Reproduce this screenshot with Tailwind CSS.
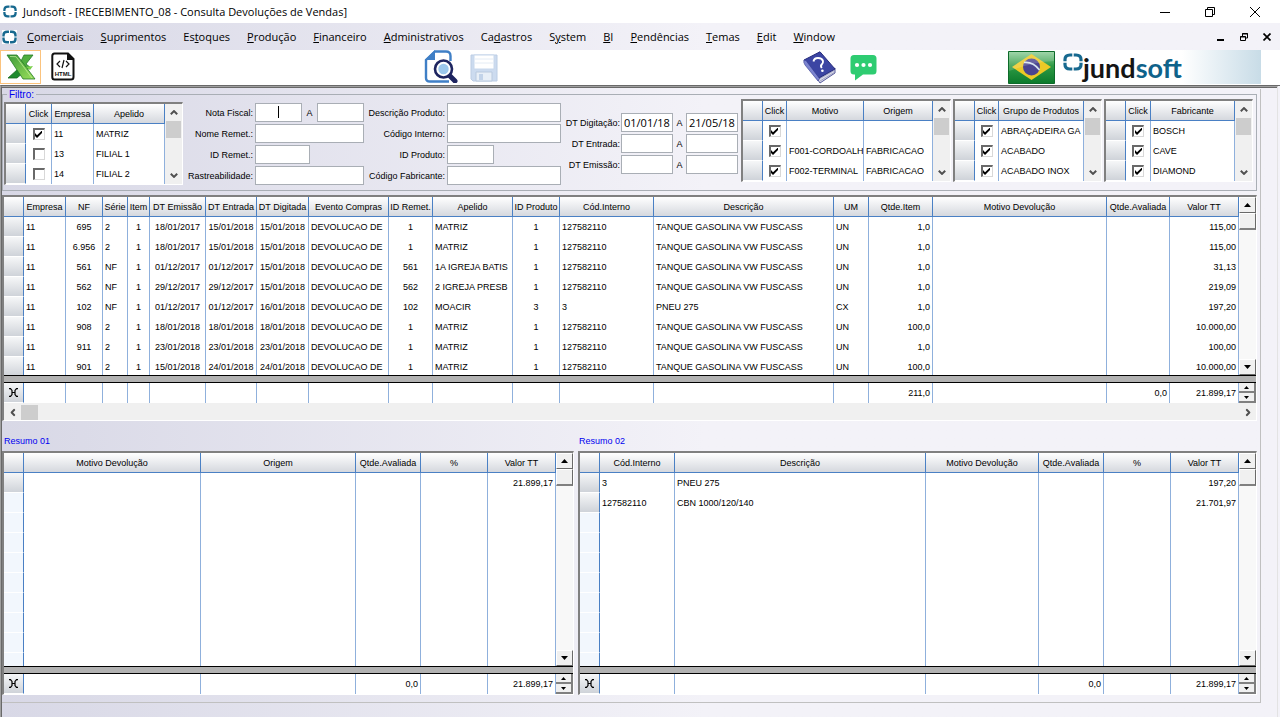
<!DOCTYPE html>
<html lang="pt-BR">
<head>
<meta charset="utf-8">
<meta name="viewport" content="width=device-width, initial-scale=1">
<title>Jundsoft - [RECEBIMENTO_08 - Consulta Devoluções de Vendas]</title>
<script src="https://cdn.jsdelivr.net/npm/@tailwindcss/browser@4"></script>
</head>
<body class="min-h-screen flex flex-col bg-white text-black text-[9px] leading-5 font-['Liberation_Sans',Arial,sans-serif]">

<svg class="hidden" aria-hidden="true">
  <symbol id="ring" viewBox="0 0 20 18">
    <path d="M9.300 2H7Q2 2 2 6.500V8.300M10.700 2H13q5 0 5 4.500v1.800M2 9.700v1.800Q2 16 7 16h2.300M10.700 16H13q5 0 5-4.500V9.700" fill="none" stroke="#17698f" stroke-width="3.200"/>
  </symbol>
  <symbol id="tick" viewBox="0 0 7 7"><path d="M0 2v3l2 2 5-5V-.5L2 4.200z" fill="#000"/></symbol>
  <symbol id="chev" viewBox="0 0 8 5"><path d="M.8 4.300 4 1.100l3.200 3.200" fill="none" stroke="#505050" stroke-width="2"/></symbol>
  <symbol id="tri" viewBox="0 0 7 4"><path d="M0 4 3.500 0 7 4z" fill="#000"/></symbol>
</svg>

<header class="h-[23px] bg-white flex items-center pl-[3px] font-['Open_Sans',sans-serif] text-[11px]">
  <svg class="w-[14px] h-[13px] mr-[6px]"><use href="#ring"/></svg>
  <h1 class="flex-1 whitespace-nowrap">Jundsoft - [RECEBIMENTO_08 - Consulta Devoluções de Vendas]</h1>
  <div class="flex items-center gap-[35px] pr-5">
    <button aria-label="Minimizar"><svg width="10" height="10" viewBox="0 0 10 10"><path d="M0 5.500h10" stroke="#000"/></svg></button>
    <button aria-label="Restaurar"><svg width="10" height="10" viewBox="0 0 10 10" fill="none" stroke="#000"><path d="M.5 2.500h7v7h-7zM2.500 2.500v-2h7v7h-2"/></svg></button>
    <button aria-label="Fechar"><svg width="10" height="10" viewBox="0 0 10 10"><path d="m0 0 10 10M10 0 0 10" stroke="#000"/></svg></button>
  </div>
</header>

<nav class="h-[27px] flex items-center pl-[2px] pr-[9px] bg-linear-to-r from-[#d8d8e6] to-[#f3f2f8] to-55% font-['Open_Sans',sans-serif] text-[11px]" aria-label="Menu principal">
  <svg class="w-[15px] h-[14px] mr-[10px] bg-white"><use href="#ring"/></svg>
  <div class="flex-1 flex gap-[17px] whitespace-nowrap">
    <button><u>C</u>omerciais</button><button><u>S</u>uprimentos</button><button>Es<u>t</u>oques</button><button><u>P</u>rodução</button><button><u>F</u>inanceiro</button><button><u>A</u>dministrativos</button><button>Ca<u>d</u>astros</button><button>S<u>y</u>stem</button><button><u>B</u>I</button><button><u>P</u>endências</button><button><u>T</u>emas</button><button><u>E</u>dit</button><button><u>W</u>indow</button>
  </div>
  <div class="flex items-center gap-[15px]">
    <button aria-label="Minimizar janela"><svg width="8" height="8" viewBox="0 0 8 8"><path d="M0 7h7" stroke="#000" stroke-width="2"/></svg></button>
    <button aria-label="Restaurar janela"><svg width="8" height="8" viewBox="0 0 8 8" fill="none" stroke="#000"><path d="M.5 3.500h5v4h-5zM0 4h6M2.500 3V.5h5v4.500H6M2 1h6"/></svg></button>
    <button aria-label="Fechar janela"><svg width="8" height="8" viewBox="0 0 8 8"><path d="m.5.5 7 7M7.500.5l-7 7" stroke="#000" stroke-width="1.700"/></svg></button>
  </div>
</nav>

<div class="h-[35px] bg-white flex items-start pr-[19px]" role="toolbar" aria-label="Ferramentas">
  <button class="w-[41px] h-[34px] border border-[#fbc37d] flex items-center justify-center" aria-label="Exportar para Excel">
    <svg width="30" height="27" viewBox="0 0 30 27">
      <defs><linearGradient id="xg" x1="0" y1="0" x2="1" y2="1"><stop offset="0" stop-color="#3c9a3a"/><stop offset="1" stop-color="#9be05a"/></linearGradient></defs>
      <path d="M18 1h9l-7 9 5 4-9 3-4-4z" fill="#4fae3f" stroke="#237a27" stroke-width=".8"/>
      <path d="M12 15 2 24h9l7-6z" fill="#1f8a2e" stroke="#17691f" stroke-width=".8"/>
      <path d="M1 1h10l18 24H17z" fill="url(#xg)" stroke="#237a27" stroke-width=".8"/>
      <path d="m4 2.500 6 .2L26 24" fill="none" stroke="#c8f0a0" stroke-opacity=".7"/>
      <path d="m20 13 7-1-3 4z" fill="#7bd14b"/>
    </svg>
  </button>
  <button class="ml-[10px] mt-[2px]" aria-label="Exportar para HTML">
    <svg width="24" height="29" viewBox="0 0 24 29">
      <path d="M3.500 1.500H17l5.500 5.500v18q0 2.500-2.500 2.500H3.500Q1.300 27.500 1.300 25V4q0-2.500 2.200-2.500z" fill="#fff" stroke="#111" stroke-width="2"/>
      <path d="M16 1v7h7z" fill="#111"/>
      <path d="m9 9-3 3 3 3M15 9l3 3-3 3M13 8l-2 8" fill="none" stroke="#111" stroke-width="1.200"/>
      <text x="12" y="24" text-anchor="middle" font-family="Liberation Sans" font-weight="bold" font-size="6" fill="#111">HTML</text>
    </svg>
  </button>
  <div class="flex-1 flex justify-end"><button class="mr-3" aria-label="Consultar">
    <svg width="34" height="33" viewBox="0 0 34 33">
      <path d="M26.500 11V6q0-4.500-4.500-4.500H11L2 10v18q0 3.500 4 3.500h19" fill="none" stroke="#3f7fc6" stroke-width="2.400"/>
      <path d="M11 0v10H1z" fill="#3f7fc6"/>
      <path d="m25 25 6 6" stroke="#1e2560" stroke-width="5" stroke-linecap="round"/>
      <circle cx="19.500" cy="19" r="8.500" fill="#fff" stroke="#1e2560" stroke-width="2.600"/>
      <circle cx="19.500" cy="19" r="5.200" fill="#9cc8ec"/>
    </svg>
  </button>
  <button class="mt-[2px]" aria-label="Salvar" disabled>
    <svg width="28" height="28" viewBox="0 0 28 28">
      <path d="M1 1h26v26H3l-2-2z" fill="#ccdbef" stroke="#bccde4"/>
      <path d="M4 1h20v14H4z" fill="#fff" stroke="#c8d8ec"/>
      <path d="M5 5h18M5 9h18" stroke="#e4ecf5"/>
      <path d="M6 18h16v9H6z" fill="#e8eff7" stroke="#b9c9de"/>
      <path d="M9 20h4v6H9z" fill="#c2d3e9"/>
    </svg>
  </button></div>
  <div class="w-[763px] flex items-start pl-[305px]">
  <button class="mt-px" aria-label="Ajuda">
    <svg width="34" height="33" viewBox="0 0 34 33">
      <path d="m1 9 14 20 2 3 15-10v-5L17 26z" fill="#d9dae8" stroke="#55599a"/>
      <path d="m16 28 16-9m-15 11 15-9" stroke="#8a8db5" stroke-width=".7"/>
      <path d="M1 9 17 .8 32 18l-16 9z" fill="#3c45a3" stroke="#262c7c"/>
      <path d="m1 9 2 .5 13.500 18L15 30 2 14Q0 11 1 9z" fill="#7c84cf" stroke="#333a90" stroke-width=".6"/>
      <path d="M10.500 10.500q.5-3.500 4.500-3.500t5 3q.3 2-1.300 3.500-1.500 1.500.1 3.500" fill="none" stroke="#fff" stroke-width="1.900"/>
      <circle cx="19.400" cy="19.800" r="1.300" fill="#fff"/>
    </svg>
  </button>
  <button class="ml-[13px] mt-[5px]" aria-label="Mensagens">
    <svg width="27" height="26" viewBox="0 0 27 26"><path d="M4 0h19q3.500 0 3.500 3.500V16q0 3.500-3.500 3.500H13L5 25.500v-6H4Q.5 19.500.5 16V3.500Q.5 0 4 0z" fill="#2ecc71"/><g fill="#fff"><circle cx="7" cy="10" r="2.100"/><circle cx="13.500" cy="10" r="2.100"/><circle cx="20" cy="10" r="2.100"/></g></svg>
  </button>
  <svg class="ml-auto" width="47" height="34" viewBox="0 0 47 34" role="img" aria-label="Brasil">
    <defs><linearGradient id="fg" x1="0" y1="0" x2="0" y2="1"><stop offset="0" stop-color="#8fcf9a"/><stop offset=".45" stop-color="#2f9a45"/><stop offset="1" stop-color="#0b7a2b"/></linearGradient></defs>
    <path d="M.5 1.500h46v32H.5z" fill="url(#fg)" stroke="#0d6b2a"/>
    <path d="M23.500 4 43 17 23.500 30 4 17z" fill="#ecc926"/>
    <circle cx="23.500" cy="17" r="8.500" fill="#4a4591"/>
    <path d="M16 12.500q9-1 15.500 7.500" fill="none" stroke="#d6e4ef" stroke-width="1.700"/>
    <path d="M1 2h45v9q-20 1-45 10z" fill="#fff" fill-opacity=".16"/>
  </svg>
  <div class="ml-2 w-[198px] h-[34px] flex items-start bg-linear-to-r from-white from-60% to-[#c8dce7]">
    <svg class="mt-[3px] w-[20px] h-[18px]"><use href="#ring"/></svg>
    <span class="font-['Lato',sans-serif] font-bold text-[27px] leading-9 text-[#141414]">jund<span class="text-[#0f628a]">soft</span></span>
  </div>
  </div>
</div>

<main class="flex-1 flex flex-col border-t border-t-[#696969] border-l border-l-[#a0a0a0] pr-[2px] bg-linear-to-r from-[#d8d8e6] to-[#f3f2f8] to-55%">
<div class="flex-1 border-t border-t-[#a0a0a0] shadow-[inset_0_1px_0_#696969] border-l border-l-[#696969] border-r border-r-[#e3e3e3] pr-[16px] pb-[14px] flex flex-col">
<div class="flex-1 flex flex-col mt-[2px] border-r border-b border-[#c0c0c0] pr-[3px]">

  <fieldset class="border border-[#a9aeb5] px-px pb-[5px] min-w-0">
    <legend class="ml-[3px] px-[2px] h-[10px] leading-3 text-[10px] text-[#0000f0]">Filtro:</legend>
    <div class="w-full flex items-start">
    <div class="w-[179px] mt-[3px] shrink-0" data-list="empresa"></div>
    <div class="flex flex-col gap-[2px] pt-1 whitespace-nowrap">
      <div class="flex h-[19px] items-center"><label for="nf1" class="w-[72px] text-right pr-[2px]">Nota Fiscal:</label><span class="relative flex"><input id="nf1" class="w-[47px] h-[19px] bg-white border border-[#a9aeb5]"><i class="absolute left-[23px] top-[3px] w-px h-[12px] bg-black"></i></span><label for="nf2" class="w-[15px] text-center">A</label><input id="nf2" class="w-[47px] h-[19px] bg-white border border-[#a9aeb5]"></div>
      <div class="flex h-[19px] items-center"><label for="nome" class="w-[72px] text-right pr-[2px]">Nome Remet.:</label><input id="nome" class="w-[109px] h-[19px] bg-white border border-[#a9aeb5]"></div>
      <div class="flex h-[19px] items-center"><label for="idr" class="w-[72px] text-right pr-[2px]">ID Remet.:</label><input id="idr" class="w-[55px] h-[19px] bg-white border border-[#a9aeb5]"></div>
      <div class="flex h-[19px] items-center"><label for="rast" class="w-[72px] text-right pr-[2px]">Rastreabilidade:</label><input id="rast" class="w-[109px] h-[19px] bg-white border border-[#a9aeb5]"></div>
    </div>
    <div class="flex flex-col gap-[2px] pt-1 whitespace-nowrap">
      <div class="flex h-[19px] items-center"><label for="desc" class="w-[83px] text-right pr-[2px]">Descrição Produto:</label><input id="desc" class="w-[114px] h-[19px] bg-white border border-[#a9aeb5]"></div>
      <div class="flex h-[19px] items-center"><label for="cod" class="w-[83px] text-right pr-[2px]">Código Interno:</label><input id="cod" class="w-[114px] h-[19px] bg-white border border-[#a9aeb5]"></div>
      <div class="flex h-[19px] items-center"><label for="idp" class="w-[83px] text-right pr-[2px]">ID Produto:</label><input id="idp" class="w-[47px] h-[19px] bg-white border border-[#a9aeb5]"></div>
      <div class="flex h-[19px] items-center"><label for="fab" class="w-[83px] text-right pr-[2px]">Código Fabricante:</label><input id="fab" class="w-[114px] h-[19px] bg-white border border-[#a9aeb5]"></div>
    </div>
    <div class="flex flex-col gap-[2px] pt-[14px] pr-[3px] whitespace-nowrap">
      <div class="flex h-[19px] items-center"><label for="d1" class="w-[60px] text-right pr-px">DT Digitação:</label><input id="d1" value="01/01/18" class="w-[52px] h-[19px] px-[2px] bg-white border border-[#a9aeb5] text-[11px] font-['Open_Sans',sans-serif]"><label for="d2" class="w-[13px] text-center">A</label><input id="d2" value="21/05/18" class="w-[52px] h-[19px] px-[2px] bg-white border border-[#a9aeb5] text-[11px] font-['Open_Sans',sans-serif]"></div>
      <div class="flex h-[19px] items-center"><label for="d3" class="w-[60px] text-right pr-px">DT Entrada:</label><input id="d3" class="w-[52px] h-[19px] bg-white border border-[#a9aeb5]"><label for="d4" class="w-[13px] text-center">A</label><input id="d4" class="w-[52px] h-[19px] bg-white border border-[#a9aeb5]"></div>
      <div class="flex h-[19px] items-center"><label for="d5" class="w-[60px] text-right pr-px">DT Emissão:</label><input id="d5" class="w-[52px] h-[19px] bg-white border border-[#a9aeb5]"><label for="d6" class="w-[13px] text-center">A</label><input id="d6" class="w-[52px] h-[19px] bg-white border border-[#a9aeb5]"></div>
    </div>
    <div class="flex-1 min-w-0 flex gap-[2px] pr-[2px]">
      <div class="flex-[210] min-w-0" data-list="motivo"></div>
      <div class="flex-[149] min-w-0" data-list="grupo"></div>
      <div class="flex-[149] min-w-0" data-list="fabricante"></div>
    </div>
    </div>
  </fieldset>

  <section class="mt-1" aria-label="Devoluções" data-grid="main"></section>

  <div class="flex gap-1 mt-[10px]">
    <section class="flex-[572] min-w-0"><h2 class="pl-[2px] text-[#0000f0]">Resumo 01</h2><div data-grid="r1"></div></section>
    <section class="flex-[679] min-w-0"><h2 class="pl-px text-[#0000f0]">Resumo 02</h2><div data-grid="r2"></div></section>
  </div>
</div>
</div>
</main>

<script>
const FRAME = 'border-t-2 border-l-2 border-r border-b border-t-[#808080] border-l-[#808080] border-r-white border-b-white bg-white';
const HEAD = 'h-5 leading-[18px] p-0 pt-px font-normal text-center whitespace-nowrap overflow-hidden border-r border-b border-[#4a80c4] bg-linear-to-b from-white to-[#d5d8de]';
const IND = 'h-5 p-0 border-r border-r-[#4a80c4] border-b border-b-white bg-linear-to-b from-[#f6f7f8] to-[#cfd3d9]';
const IND_EMPTY = 'h-5 p-0 border-r border-r-[#4a80c4] border-b border-b-white bg-[#f2f7fd]';
const CELL = 'h-5 p-0 px-[2px] whitespace-nowrap overflow-hidden border-r border-[#8fb0dc]';
const ALIGN = { l: 'text-left', c: 'text-center', r: 'text-right' };
const BTN = 'w-full h-4 shrink-0 flex items-center justify-center bg-[#f0f0f0] border border-t-white border-l-white border-r-[#696969] border-b-[#696969]';

const cols = ws => '<colgroup>' + ws.map(w => `<col${w ? ` style="width:${w}px"` : ''}>`).join('') + '</colgroup>';
const head = names => `<thead><tr><th class="${HEAD}"></th>${names.map(n => `<th class="${HEAD}">${n}</th>`).join('')}</tr></thead>`;

function list(key, widths, names, rows) {
  const body = rows.map(([on, ...texts]) => `<tr><td class="${IND}"></td><td class="${CELL}">
    <label class="grid w-[12px] h-[12px] mx-auto"><input type="checkbox" aria-label="${texts.join(' ') || 'Sem motivo'}" ${on ? 'checked' : ''} class="peer appearance-none [grid-area:1/1] w-[12px] h-[12px] bg-white border-t-2 border-l-2 border-r border-b border-t-[#696969] border-l-[#696969] border-r-[#d8d8d8] border-b-[#d8d8d8]"><svg class="[grid-area:1/1] hidden peer-checked:block place-self-center w-[7px] h-[7px] overflow-visible pointer-events-none"><use href="#tick"/></svg></label></td>
    ${texts.map(t => `<td class="${CELL}">${t}</td>`).join('')}</tr>`).join('');
  document.querySelector(`[data-list=${key}]`).innerHTML = `<div class="${FRAME} flex h-[83px] overflow-hidden">
    <div class="flex-1 min-w-0"><table class="w-full table-fixed border-separate border-spacing-0">${cols(widths)}${head(names)}<tbody>${body}</tbody></table></div>
    <div class="w-[17px] shrink-0 bg-[#f0f0f0] flex flex-col items-center">
      <button class="h-[17px] w-full flex items-center justify-center" aria-label="Rolar para cima"><svg class="w-2 h-[5px]"><use href="#chev"/></svg></button>
      <div class="w-[15px] h-[17px] bg-[#cdcdcd]"></div><div class="flex-1"></div>
      <button class="h-[17px] w-full flex items-center justify-center" aria-label="Rolar para baixo"><svg class="w-2 h-[5px] rotate-180"><use href="#chev"/></svg></button>
    </div></div>`;
}

function grid(key, widths, names, align, rows, total, blanks, bodyClass, hscroll) {
  const line = (r, ind) => `<tr>${ind}${r.map((t, i) => `<td class="${CELL} ${ALIGN[align[i]]}">${t}</td>`).join('')}</tr>`;
  const empty = names.map(() => '');
  const body = rows.map(r => line(r, `<td class="${IND}"></td>`)).join('') +
    Array.from({ length: blanks }, () => line(empty, `<td class="${IND_EMPTY}"></td>`)).join('');
  const mark = `<td class="${IND}"><svg class="mx-auto" width="9" height="9" viewBox="0 0 9 9" fill="none" stroke="#000" stroke-width="1.200"><path d="M0 .6h1.500L3 2.500v4L1.500 8.400H0M9 .6H7.500L6 2.500v4l1.500 1.900H9M3 4.500h3"/></svg></td>`;
  document.querySelector(`[data-grid=${key}]`).innerHTML = `<div class="${FRAME}">
    <div class="flex ${bodyClass} overflow-hidden">
      <div class="flex-1 min-w-0"><table class="w-full table-fixed border-separate border-spacing-0">${cols(widths)}${head(names)}<tbody>${body}</tbody></table></div>
      <div class="w-[17px] shrink-0 bg-[#f8f8f8] flex flex-col">
        <button class="${BTN}" aria-label="Rolar para cima"><svg class="w-[7px] h-1"><use href="#tri"/></svg></button>
        <div class="h-[17px] bg-[#f0f0f0] border border-t-white border-l-white border-b-2 border-r-[#696969] border-b-[#808080]"></div>
        <div class="flex-1"></div>
        <button class="${BTN}" aria-label="Rolar para baixo"><svg class="w-[7px] h-1 rotate-180"><use href="#tri"/></svg></button>
      </div>
    </div>
    <div class="h-2 bg-[#b2b2b2] border-y border-black"></div>
    <div class="flex">
      <div class="flex-1 min-w-0"><table class="w-full table-fixed border-separate border-spacing-0" aria-label="Totais">${cols(widths)}<tbody>${line(total, mark)}</tbody></table></div>
      <div class="w-[17px] shrink-0 flex flex-col">
        <button class="h-[10px] flex items-center justify-center bg-[#f0f0f0] border-r-2 border-b-2 border-[#808080]" aria-label="Aumentar"><svg class="w-[5px] h-[3px]"><use href="#tri"/></svg></button>
        <button class="h-[10px] flex items-center justify-center bg-[#f0f0f0] border-r-2 border-b-2 border-[#808080]" aria-label="Diminuir"><svg class="w-[5px] h-[3px] rotate-180"><use href="#tri"/></svg></button>
      </div>
    </div>
    ${hscroll ? `<div class="h-[17px] pt-px bg-[#f0f0f0] flex items-center">
      <button class="w-[17px] h-4 flex items-center justify-center" aria-label="Rolar para a esquerda"><svg class="w-2 h-[5px] -rotate-90"><use href="#chev"/></svg></button>
      <div class="w-[17px] h-[15px] bg-[#cdcdcd]"></div><div class="flex-1"></div>
      <button class="w-[17px] h-4 flex items-center justify-center" aria-label="Rolar para a direita"><svg class="w-2 h-[5px] rotate-90"><use href="#chev"/></svg></button></div>` : ''}
  </div>`;
}

list('empresa', [20, 26, 42, 0], ['Click', 'Empresa', 'Apelido'], [[1, '11', 'MATRIZ'], [0, '13', 'FILIAL 1'], [0, '14', 'FILIAL 2']]);
list('motivo', [20, 24, 77, 0], ['Click', 'Motivo', 'Origem'], [[1, '', ''], [1, 'F001-CORDOALH', 'FABRICACAO'], [1, 'F002-TERMINAL', 'FABRICACAO']]);
list('grupo', [20, 24, 0], ['Click', 'Grupo de Produtos'], [[1, 'ABRAÇADEIRA GA'], [1, 'ACABADO'], [1, 'ACABADO INOX']]);
list('fabricante', [20, 25, 0], ['Click', 'Fabricante'], [[1, 'BOSCH'], [1, 'CAVE'], [1, 'DIAMOND']]);

const D = 'DEVOLUCAO DE', T = 'TANQUE GASOLINA VW FUSCASS', C = '127582110';
grid('main', [20, 42, 37, 25, 22, 56, 51, 52, 80, 44, 80, 47, 94, 180, 35, 64, 0, 63, 69],
  ['Empresa', 'NF', 'Série', 'Item', 'DT Emissão', 'DT Entrada', 'DT Digitada', 'Evento Compras', 'ID Remet.', 'Apelido', 'ID Produto', 'Cód.Interno', 'Descrição', 'UM', 'Qtde.Item', 'Motivo Devolução', 'Qtde.Avaliada', 'Valor TT'],
  'lclcccclclclllrlrr', [
  ['11', '695', '2', '1', '18/01/2017', '15/01/2018', '15/01/2018', D, '1', 'MATRIZ', '1', C, T, 'UN', '1,0', '', '', '115,00'],
  ['11', '6.956', '2', '1', '18/01/2017', '15/01/2018', '15/01/2018', D, '1', 'MATRIZ', '1', C, T, 'UN', '1,0', '', '', '115,00'],
  ['11', '561', 'NF', '1', '01/12/2017', '01/12/2017', '15/01/2018', D, '561', '1A IGREJA BATIS', '1', C, T, 'UN', '1,0', '', '', '31,13'],
  ['11', '562', 'NF', '1', '29/12/2017', '29/12/2017', '15/01/2018', D, '562', '2 IGREJA PRESB', '1', C, T, 'UN', '1,0', '', '', '219,09'],
  ['11', '102', 'NF', '1', '01/12/2017', '01/12/2017', '16/01/2018', D, '102', 'MOACIR', '3', '3', 'PNEU 275', 'CX', '1,0', '', '', '197,20'],
  ['11', '908', '2', '1', '18/01/2018', '18/01/2018', '18/01/2018', D, '1', 'MATRIZ', '1', C, T, 'UN', '100,0', '', '', '10.000,00'],
  ['11', '911', '2', '1', '23/01/2018', '23/01/2018', '23/01/2018', D, '1', 'MATRIZ', '1', C, T, 'UN', '1,0', '', '', '100,00'],
  ['11', '901', '2', '1', '15/01/2018', '24/01/2018', '24/01/2018', D, '1', 'MATRIZ', '1', C, T, 'UN', '100,0', '', '', '10.000,00']],
  ['', '', '', '', '', '', '', '', '', '', '', '', '', '', '211,0', '', '0,0', '21.899,17'], 0, 'h-[178px]', true);
grid('r1', [20, 0, 155, 65, 67, 68], ['Motivo Devolução', 'Origem', 'Qtde.Avaliada', '%', 'Valor TT'], 'llrrr',
  [['', '', '', '', '21.899,17']], ['', '', '0,0', '', '21.899,17'], 9, 'h-[213px]', false);
grid('r2', [20, 75, 0, 113, 65, 67, 68], ['Cód.Interno', 'Descrição', 'Motivo Devolução', 'Qtde.Avaliada', '%', 'Valor TT'], 'lllrrr',
  [['3', 'PNEU 275', '', '', '', '197,20'], [C, 'CBN 1000/120/140', '', '', '', '21.701,97']], ['', '', '', '0,0', '', '21.899,17'], 8, 'h-[213px]', false);
</script>
</body>
</html>
